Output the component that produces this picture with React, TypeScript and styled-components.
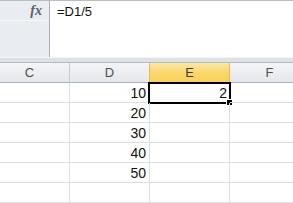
import React from 'react';
import styled, { createGlobalStyle } from 'styled-components';

const GlobalStyle = createGlobalStyle`
    html, body {
        margin: 0;
        padding: 0;
        background: #ffffff;
        overflow: hidden;
    }
`;

const Sheet = styled.div`
    width: 293px;
    height: 203px;
    overflow: hidden;
    display: flex;
    flex-direction: column;
    font-family: "Liberation Sans", Arial, sans-serif;
`;

const FormulaBar = styled.div`
    display: flex;
    height: 60px;
    border-top: 1px solid #b9bec6;
    box-sizing: border-box;
`;

const FxPanel = styled.div`
    width: 49px;
    background: #e9ecf0;
    border-right: 1px solid #a9b0b9;
    display: flex;
    flex-direction: column;
`;

const FxButton = styled.div`
    height: 19px;
    border-bottom: 1px solid #f7f8fa;
    display: flex;
    align-items: center;
    justify-content: flex-end;
    padding-right: 7px;
    font-family: "Liberation Serif", "Times New Roman", serif;
    font-style: italic;
    font-weight: bold;
    font-size: 14px;
    color: #5a6068;
`;

const FormulaInput = styled.div`
    flex: 1;
    background: #ffffff;
    padding: 3px 0 0 7px;
    font-size: 13px;
    color: #111;
`;

const Splitter = styled.div`
    height: 4px;
    background: #dee2e7;
    border-top: 1px solid #f4f5f7;
    border-bottom: 1px solid #b7bdc5;
`;

const Grid = styled.div`
    display: grid;
    grid-template-columns: repeat(4, 80px);
    grid-auto-rows: 20px;
    margin-left: -10px;
`;

const Header = styled.div<{ $selected?: boolean }>`
    box-sizing: border-box;
    display: flex;
    align-items: center;
    justify-content: center;
    font-size: 13px;
    color: ${p => (p.$selected ? '#3c3c3c' : '#4f4f4f')};
    background: ${p =>
        p.$selected
            ? 'linear-gradient(#fbe7a4, #f9d66a 55%, #f8d25c)'
            : 'linear-gradient(#f4f5f7, #e4e7eb)'};
    border-right: 1px solid ${p => (p.$selected ? '#e9b94d' : '#c7ccd3')};
    border-left: ${p => (p.$selected ? '1px solid #e9b94d' : 'none')};
    border-bottom: 1px solid #a9b0ba;
    margin-left: ${p => (p.$selected ? '-1px' : '0')};
`;

const Cell = styled.div`
    position: relative;
    box-sizing: border-box;
    display: flex;
    align-items: center;
    justify-content: flex-end;
    padding-right: 3px;
    font-size: 14px;
    color: #111;
    border-right: 1px solid #dcdee1;
    border-bottom: 1px solid #dcdee1;
`;

const Selection = styled.div`
    position: absolute;
    left: -2px;
    top: -1px;
    right: -2px;
    bottom: -2px;
    border: 2px solid #000;
    display: flex;
    align-items: center;
    justify-content: flex-end;
    padding-right: 2px;
`;

const FillHandle = styled.div`
    position: absolute;
    right: -4px;
    bottom: -4px;
    width: 5px;
    height: 5px;
    background: #000;
    border: 1px solid #fff;
`;

const columns = ['C', 'D', 'E', 'F'];
const values = [10, 20, 30, 40, 50, null];

export default function App() {
    return (
        <Sheet>
            <GlobalStyle />
            <FormulaBar>
                <FxPanel>
                    <FxButton>fx</FxButton>
                </FxPanel>
                <FormulaInput>=D1/5</FormulaInput>
            </FormulaBar>
            <Splitter />
            <Grid>
                {columns.map(c => (
                    <Header key={c} $selected={c === 'E'}>{c}</Header>
                ))}
                {values.map((v, i) => (
                    <React.Fragment key={i}>
                        <Cell />
                        <Cell>{v}</Cell>
                        <Cell>
                            {i === 0 && (
                                <Selection>
                                    2
                                    <FillHandle />
                                </Selection>
                            )}
                        </Cell>
                        <Cell />
                    </React.Fragment>
                ))}
            </Grid>
        </Sheet>
    );
}
